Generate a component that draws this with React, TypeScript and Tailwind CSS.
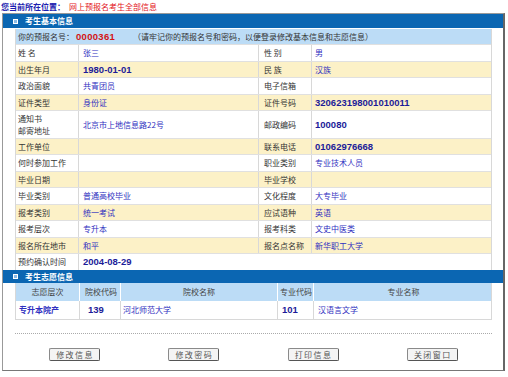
import React from 'react';

type Row = {
  l1: string;
  v1: string;
  n1?: boolean;
  l2?: string;
  v2?: string;
  n2?: boolean;
  span?: boolean;
  tall?: boolean;
};

const rows: Row[] = [
  { l1: '姓 名', v1: '张三', l2: '性 别', v2: '男' },
  { l1: '出生年月', v1: '1980-01-01', n1: true, l2: '民 族', v2: '汉族' },
  { l1: '政治面貌', v1: '共青团员', l2: '电子信箱', v2: '' },
  { l1: '证件类型', v1: '身份证', l2: '证件号码', v2: '320623198001010011', n2: true },
  { l1: '通知书\n邮寄地址', v1: '北京市上地信息路22号', l2: '邮政编码', v2: '100080', n2: true, tall: true },
  { l1: '工作单位', v1: '', l2: '联系电话', v2: '01062976668', n2: true },
  { l1: '何时参加工作', v1: '', l2: '职业类别', v2: '专业技术人员' },
  { l1: '毕业日期', v1: '', l2: '毕业学校', v2: '' },
  { l1: '毕业类别', v1: '普通高校毕业', l2: '文化程度', v2: '大专毕业' },
  { l1: '报考类别', v1: '统一考试', l2: '应试语种', v2: '英语' },
  { l1: '报考层次', v1: '专升本', l2: '报考科类', v2: '文史中医类' },
  { l1: '报名所在地市', v1: '和平', l2: '报名点名称', v2: '新华职工大学' },
  { l1: '预约确认时间', v1: '2004-08-29', n1: true, span: true },
];

const Value: React.FC<{ text: string; num?: boolean }> = ({ text, num }) =>
  num ? (
    <span className="font-['Liberation_Sans',Arial,sans-serif] font-bold text-[9.5px] text-[#1c1c99]">{text}</span>
  ) : (
    <span className="text-[#2f2fc0]">{text}</span>
  );

const SectionBar: React.FC<{ title: string; className?: string }> = ({ title, className }) => (
  <div className={`flex items-center bg-[#0b66b2] pl-[10px] ${className ?? ''}`}>
    <span className="w-[5px] h-[5px] border border-white bg-[#8cbce6]" />
    <span className="ml-[7px] text-white font-bold">{title}</span>
  </div>
);

const Btn: React.FC<{ label: string }> = ({ label }) => (
  <button className="w-[51px] h-[13px] flex items-center justify-center bg-[#f4f4f4] border border-[#8a8a8a] border-r-[#555] border-b-[#555] rounded-[2px] text-[#555] text-[8px] tracking-[1.5px] pl-[1px]">
    {label}
  </button>
);

export default function App() {
  return (
    <div className="w-[508px] h-[377px] bg-white overflow-hidden font-['Noto_Sans_CJK_SC',sans-serif] text-[8px] leading-none text-[#333]">
      {/* 位置 */}
      <div className="h-[13px] flex items-center pl-px">
        <span className="text-[#1d1db0] font-bold">您当前所在位置：</span>
        <span className="text-[#e3141a] ml-[4px]">网上预报名考生全部信息</span>
      </div>

      <div className="ml-[2px] w-[503px] h-[358px] border border-[#999] border-r-2 border-r-[#666] border-b-[#777] flex flex-col">
        <SectionBar title="考生基本信息" className="h-[14px]" />

        <div className="ml-[12px] w-[477px] mt-px border-x border-[#d8d8d8]">
          <div className="h-[15px] flex items-center bg-[#bcdcf6] pl-[2px]">
            <span>你的预报名号：</span>
            <span className="ml-[2px] font-['Liberation_Sans',Arial,sans-serif] font-bold text-[9.5px] text-[#d41414] tracking-[0.3px]">0000361</span>
            <span className="ml-[18px]">（请牢记你的预报名号和密码，以便登录修改基本信息和志愿信息）</span>
          </div>

          {rows.map((r, i) => (
            <div
              key={i}
              className={`grid grid-cols-[63px_180px_53px_179px] border-t border-[#e0e0e0] ${
                r.tall ? 'h-[28px]' : i % 2 === 0 ? 'h-[17px]' : 'h-[16px]'
              } ${i % 2 === 1 ? 'bg-[#fcf1c7]' : 'bg-white'}`}
            >
              <div className="flex flex-col justify-center pl-[2px] border-r border-[#d8d8d8] gap-[4px]">
                {r.l1.split('\n').map((t) => (
                  <span key={t} className="whitespace-nowrap">{t}</span>
                ))}
              </div>
              {r.span ? (
                <div className="col-span-3 flex items-center pl-[4px]">
                  <Value text={r.v1} num={r.n1} />
                </div>
              ) : (
                <>
                  <div className="flex items-center pl-[4px] border-r border-[#d8d8d8]">
                    <Value text={r.v1} num={r.n1} />
                  </div>
                  <div className="flex items-center pl-[5px] border-r border-[#d8d8d8] whitespace-nowrap">{r.l2}</div>
                  <div className="flex items-center pl-[3px]">
                    <Value text={r.v2 ?? ''} num={r.n2} />
                  </div>
                </>
              )}
            </div>
          ))}
        </div>

        <SectionBar title="考生志愿信息" className="h-[13px]" />

        <div className="ml-[12px] w-[477px] border-x border-b border-[#d8d8d8]">
          <div className="grid grid-cols-[64px_41px_157px_36px_179px] h-[18px] bg-[#bcdcf6] text-[#444]">
            <div className="flex items-center justify-center border-r border-white">志愿层次</div>
            <div className="flex items-center pl-[5px] border-r border-white">院校代码</div>
            <div className="flex items-center justify-center border-r border-white">院校名称</div>
            <div className="flex items-center pl-[2px] border-r border-white">专业代码</div>
            <div className="flex items-center justify-center">专业名称</div>
          </div>
          <div className="grid grid-cols-[64px_41px_157px_36px_179px] h-[18px] bg-white">
            <div className="flex items-center pl-[3px] border-r border-[#d8d8d8] text-[#2f2fc0] font-bold">专升本院产</div>
            <div className="flex items-center pl-[8px] border-r border-[#d8d8d8]">
              <Value text="139" num />
            </div>
            <div className="flex items-center pl-[2px] border-r border-[#d8d8d8]">
              <Value text="河北师范大学" />
            </div>
            <div className="flex items-center pl-[4px] border-r border-[#d8d8d8]">
              <Value text="101" num />
            </div>
            <div className="flex items-center pl-[4px]">
              <Value text="汉语言文学" />
            </div>
          </div>
        </div>

        <div className="ml-[12px] w-[477px] mt-[13px] border-t border-dotted border-[#aaa]" />

        <div className="ml-[12px] w-[477px] mt-[14px] flex justify-around">
          <Btn label="修改信息" />
          <Btn label="修改密码" />
          <Btn label="打印信息" />
          <Btn label="关闭窗口" />
        </div>
      </div>
    </div>
  );
}
